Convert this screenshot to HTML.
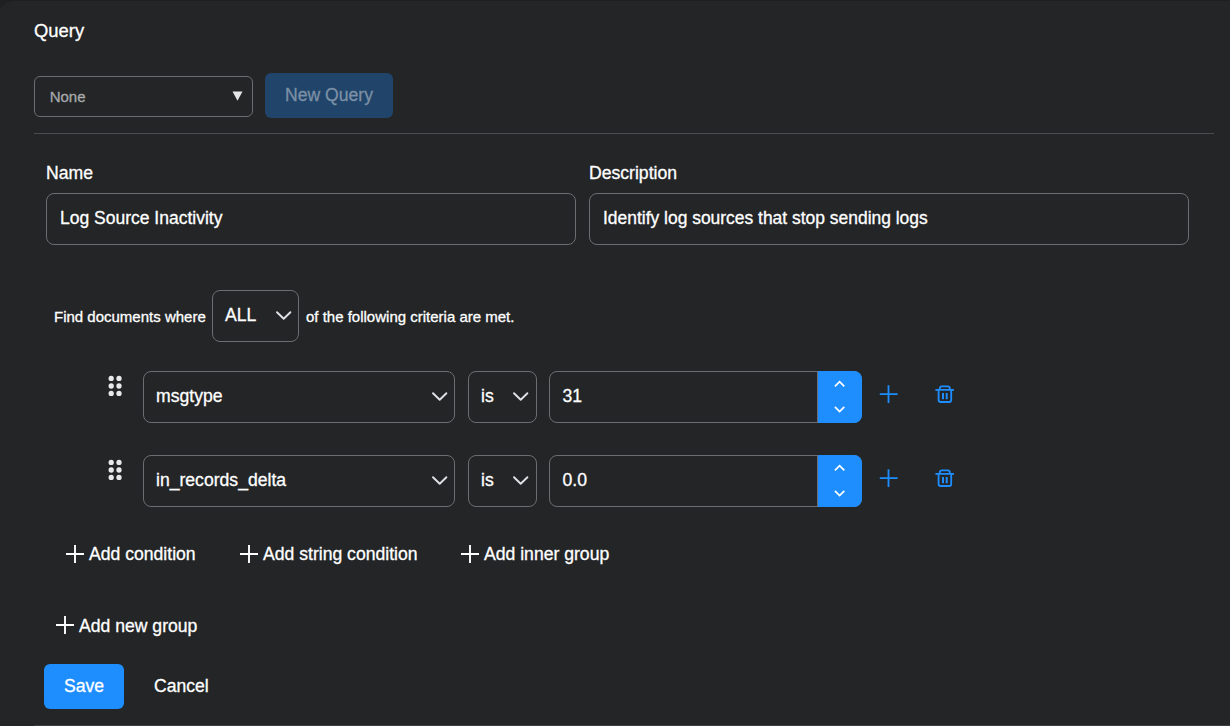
<!DOCTYPE html>
<html>
<head>
<meta charset="utf-8">
<style>
html,body{margin:0;padding:0;}
body{width:1230px;height:726px;overflow:hidden;background:#1f2022;font-family:"Liberation Sans",sans-serif;color:#fff;position:relative;}
.abs{position:absolute;}
.t{position:absolute;white-space:nowrap;line-height:1;-webkit-text-stroke:0.3px currentColor;}
.box{position:absolute;box-sizing:border-box;border:1px solid #6b6d70;border-radius:8px;}
.chev{position:absolute;}
</style>
</head>
<body>
<!-- top edge -->
<div class="abs" style="left:-1px;top:0;width:1240px;height:760px;box-sizing:border-box;background:#232527;border-top:1px solid #1d1f21;border-top-left-radius:14px;"></div>

<div class="t" id="query" style="left:34px;top:21.5px;font-size:18.4px;">Query</div>

<!-- None select -->
<div class="box" style="left:34px;top:76px;width:219px;height:41px;border-radius:6px;"></div>
<div class="t" style="left:49.7px;top:88.8px;font-size:15px;color:#a7a9ab;">None</div>
<svg class="abs" style="left:231.5px;top:91px" width="11" height="10" viewBox="0 0 11 10"><path d="M0.5 0.5 L10.5 0.5 L5.5 9.8 Z" fill="#e6e6e6"/></svg>

<!-- New Query button -->
<div class="abs" style="left:265px;top:73px;width:128px;height:45px;border-radius:6px;background:#21446a;"></div>
<div class="t" style="left:285px;top:86.5px;font-size:17.6px;color:#7b90a6;">New Query</div>

<!-- divider -->
<div class="abs" style="left:34px;top:133px;width:1180px;height:1px;background:#4a4d50"></div>

<div class="t" style="left:46px;top:165px;font-size:17.6px;">Name</div>
<div class="t" style="left:589px;top:165px;font-size:17.6px;">Description</div>

<div class="box" style="left:46px;top:193px;width:530px;height:52px;"></div>
<div class="t" style="left:60px;top:210px;font-size:17.5px;">Log Source Inactivity</div>
<div class="box" style="left:589px;top:193px;width:600px;height:52px;"></div>
<div class="t" style="left:603px;top:210px;font-size:17.45px;">Identify log sources that stop sending logs</div>

<!-- criteria -->
<div class="t" style="left:54px;top:309px;font-size:15px;">Find documents where</div>
<div class="box" style="left:212px;top:290px;width:87px;height:52px;"></div>
<div class="t" style="left:225px;top:307px;font-size:17.6px;">ALL</div>
<svg class="chev" style="left:274px;top:307px" width="20" height="16" viewBox="0 0 20 16"><path d="M3 5.2 L9.7 11.7 L16.4 5.2" fill="none" stroke="#dee2e6" stroke-width="1.9" stroke-linecap="round" stroke-linejoin="round"/></svg>
<div class="t" style="left:306px;top:309px;font-size:15px;">of the following criteria are met.</div>

<!-- row 1 -->
<svg class="abs" style="left:105px;top:373px" width="20" height="26" viewBox="0 0 20 26">
<circle cx="6.2" cy="5.4" r="2.65" fill="#e9e9e9"/><circle cx="14" cy="5.4" r="2.65" fill="#e9e9e9"/>
<circle cx="6.2" cy="13" r="2.65" fill="#e9e9e9"/><circle cx="14" cy="13" r="2.65" fill="#e9e9e9"/>
<circle cx="6.2" cy="20.4" r="2.65" fill="#e9e9e9"/><circle cx="14" cy="20.4" r="2.65" fill="#e9e9e9"/>
</svg>
<div class="box" style="left:143px;top:371px;width:312px;height:52px;"></div>
<div class="t" style="left:156px;top:388px;font-size:17.6px;">msgtype</div>
<svg class="chev" style="left:430px;top:388px" width="20" height="16" viewBox="0 0 20 16"><path d="M3 5.2 L9.7 11.7 L16.4 5.2" fill="none" stroke="#dee2e6" stroke-width="1.9" stroke-linecap="round" stroke-linejoin="round"/></svg>
<div class="box" style="left:468px;top:371px;width:69px;height:52px;"></div>
<div class="t" style="left:481px;top:388px;font-size:17.6px;">is</div>
<svg class="chev" style="left:511px;top:388px" width="20" height="16" viewBox="0 0 20 16"><path d="M3 5.2 L9.7 11.7 L16.4 5.2" fill="none" stroke="#dee2e6" stroke-width="1.9" stroke-linecap="round" stroke-linejoin="round"/></svg>
<div class="box" style="left:549px;top:371px;width:313px;height:52px;"></div>
<div class="abs" style="left:817px;top:371px;width:1px;height:52px;background:#6b6d70"></div>
<div class="abs" style="left:818px;top:371px;width:44px;height:52px;background:#1e8eff;border-radius:0 8px 8px 0;"></div>
<svg class="abs" style="left:830px;top:376px" width="20" height="40" viewBox="0 0 20 40"><path d="M4.9 10.3 L9.6 5.6 L14.3 10.3 M4.9 30.9 L9.6 35.6 L14.3 30.9" fill="none" stroke="#fff" stroke-width="1.7"/></svg>
<div class="t" style="left:562.5px;top:388px;font-size:17.6px;">31</div>
<svg class="abs" style="left:874px;top:380px" width="30" height="30" viewBox="0 0 30 30"><path d="M14.5 5.3 V22.9 M5.8 14.05 H23.6" stroke="#1e8eff" stroke-width="1.8" fill="none"/></svg>
<svg class="abs" style="left:930px;top:380px" width="30" height="30" viewBox="0 0 30 30"><path d="M5.4 9.9 H24 M9.8 9.9 V8.3 A2 2 0 0 1 11.8 6.3 H17.8 A2 2 0 0 1 19.8 8.3 V9.9 M8.6 9.9 V20 A2 2 0 0 0 10.6 22 H19.2 A2 2 0 0 0 21.2 20 V9.9" fill="none" stroke="#1e8eff" stroke-width="1.8"/><path d="M13 13 V19.2 M16.7 13 V19.2" stroke="#1e8eff" stroke-width="2" fill="none"/></svg>

<!-- row 2 -->
<svg class="abs" style="left:105px;top:457px" width="20" height="26" viewBox="0 0 20 26">
<circle cx="6.2" cy="5.4" r="2.65" fill="#e9e9e9"/><circle cx="14" cy="5.4" r="2.65" fill="#e9e9e9"/>
<circle cx="6.2" cy="13" r="2.65" fill="#e9e9e9"/><circle cx="14" cy="13" r="2.65" fill="#e9e9e9"/>
<circle cx="6.2" cy="20.4" r="2.65" fill="#e9e9e9"/><circle cx="14" cy="20.4" r="2.65" fill="#e9e9e9"/>
</svg>
<div class="box" style="left:143px;top:455px;width:312px;height:52px;"></div>
<div class="t" style="left:156px;top:472px;font-size:17.6px;">in_records_delta</div>
<svg class="chev" style="left:430px;top:472px" width="20" height="16" viewBox="0 0 20 16"><path d="M3 5.2 L9.7 11.7 L16.4 5.2" fill="none" stroke="#dee2e6" stroke-width="1.9" stroke-linecap="round" stroke-linejoin="round"/></svg>
<div class="box" style="left:468px;top:455px;width:69px;height:52px;"></div>
<div class="t" style="left:481px;top:472px;font-size:17.6px;">is</div>
<svg class="chev" style="left:511px;top:472px" width="20" height="16" viewBox="0 0 20 16"><path d="M3 5.2 L9.7 11.7 L16.4 5.2" fill="none" stroke="#dee2e6" stroke-width="1.9" stroke-linecap="round" stroke-linejoin="round"/></svg>
<div class="box" style="left:549px;top:455px;width:313px;height:52px;"></div>
<div class="abs" style="left:817px;top:455px;width:1px;height:52px;background:#6b6d70"></div>
<div class="abs" style="left:818px;top:455px;width:44px;height:52px;background:#1e8eff;border-radius:0 8px 8px 0;"></div>
<svg class="abs" style="left:830px;top:460px" width="20" height="40" viewBox="0 0 20 40"><path d="M4.9 10.3 L9.6 5.6 L14.3 10.3 M4.9 30.9 L9.6 35.6 L14.3 30.9" fill="none" stroke="#fff" stroke-width="1.7"/></svg>
<div class="t" style="left:562.5px;top:472px;font-size:17.6px;">0.0</div>
<svg class="abs" style="left:874px;top:464px" width="30" height="30" viewBox="0 0 30 30"><path d="M14.5 5.3 V22.9 M5.8 14.05 H23.6" stroke="#1e8eff" stroke-width="1.8" fill="none"/></svg>
<svg class="abs" style="left:930px;top:464px" width="30" height="30" viewBox="0 0 30 30"><path d="M5.4 9.9 H24 M9.8 9.9 V8.3 A2 2 0 0 1 11.8 6.3 H17.8 A2 2 0 0 1 19.8 8.3 V9.9 M8.6 9.9 V20 A2 2 0 0 0 10.6 22 H19.2 A2 2 0 0 0 21.2 20 V9.9" fill="none" stroke="#1e8eff" stroke-width="1.8"/><path d="M13 13 V19.2 M16.7 13 V19.2" stroke="#1e8eff" stroke-width="2" fill="none"/></svg>

<!-- add buttons -->
<svg class="abs" style="left:66px;top:545px" width="18" height="18" viewBox="0 0 18 18"><path d="M9 0 V18 M0 9 H18" stroke="#fff" stroke-width="1.9" fill="none"/></svg>
<div class="t" style="left:89px;top:546px;font-size:17.6px;">Add condition</div>
<svg class="abs" style="left:240px;top:545px" width="18" height="18" viewBox="0 0 18 18"><path d="M9 0 V18 M0 9 H18" stroke="#fff" stroke-width="1.9" fill="none"/></svg>
<div class="t" style="left:263px;top:546px;font-size:17.6px;">Add string condition</div>
<svg class="abs" style="left:461px;top:545px" width="18" height="18" viewBox="0 0 18 18"><path d="M9 0 V18 M0 9 H18" stroke="#fff" stroke-width="1.9" fill="none"/></svg>
<div class="t" style="left:484px;top:546px;font-size:17.6px;">Add inner group</div>

<svg class="abs" style="left:56px;top:616px" width="18" height="18" viewBox="0 0 18 18"><path d="M9 0 V18 M0 9 H18" stroke="#fff" stroke-width="1.9" fill="none"/></svg>
<div class="t" style="left:79px;top:618px;font-size:17.6px;">Add new group</div>

<!-- save / cancel -->
<div class="abs" style="left:44px;top:664px;width:80px;height:45px;border-radius:6px;background:#1e8eff;"></div>
<div class="t" style="left:64px;top:678px;font-size:17.6px;">Save</div>
<div class="t" style="left:154px;top:678px;font-size:17.6px;">Cancel</div>

<div class="abs" style="left:34px;top:725px;width:1196px;height:1px;background:#3c3f42"></div>
</body>
</html>
